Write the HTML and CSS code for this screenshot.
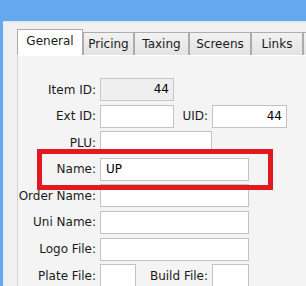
FILE: index.html
```html
<!DOCTYPE html>
<html lang="en">
<head>
    <meta charset="UTF-8">
    <meta name="viewport" content="width=device-width, initial-scale=1.0">
    <title>Item Editor</title>
    <link rel="stylesheet" href="styles.css">
</head>
<body>
    <div class="window">
        <div class="tabs">
            <div class="tab active w-general">General</div>
            <div class="tab w-pricing">Pricing</div>
            <div class="tab w-taxing">Taxing</div>
            <div class="tab w-screens">Screens</div>
            <div class="tab w-links">Links</div>
            <div class="tab w-more"></div>
        </div>
        <div class="panel">
            <div class="row">
                <label class="lbl">Item ID:</label>
                <div class="field readonly w74 num">44</div>
            </div>
            <div class="row">
                <label class="lbl">Ext ID:</label>
                <div class="field w74"></div>
                <label class="lbl2 w38">UID:</label>
                <div class="field w75 num">44</div>
            </div>
            <div class="row">
                <label class="lbl">PLU:</label>
                <div class="field w112"></div>
            </div>
            <div class="row">
                <label class="lbl">Name:</label>
                <div class="field w149">UP</div>
            </div>
            <div class="row">
                <label class="lbl">Order Name:</label>
                <div class="field w149"></div>
            </div>
            <div class="row">
                <label class="lbl">Uni Name:</label>
                <div class="field w149"></div>
            </div>
            <div class="row">
                <label class="lbl">Logo File:</label>
                <div class="field w149"></div>
            </div>
            <div class="row">
                <label class="lbl">Plate File:</label>
                <div class="field w36"></div>
                <label class="lbl2 w76">Build File:</label>
                <div class="field w37"></div>
            </div>
        </div>
        <div class="highlight"></div>
    </div>
</body>
</html>
```

FILE: styles.css
```css
body {
    margin: 0;
    background-color: #66a8f0;
    font-family: "DejaVu Sans", sans-serif;
    font-size: 12px;
    color: #1a1a1a;
    overflow: hidden;
}
.window {
    position: relative;
    margin: 21px 0 0 3px;
    height: 265px;
    background-color: #f0f0f0;
    border-top: 1px solid #d6e4f3;
    box-sizing: border-box;
    overflow: hidden;
}
.tabs {
    display: flex;
    align-items: flex-end;
    height: 26px;
    margin-top: 7px;
    padding-left: 14px;
    overflow: hidden;
}
.tab {
    flex: none;
    height: 23px;
    box-sizing: border-box;
    border: 1px solid #acacac;
    border-bottom: none;
    background: linear-gradient(#f2f2f2, #e3e3e3);
    text-align: center;
    line-height: 22px;
    white-space: nowrap;
}
.tab.active {
    position: relative;
    z-index: 1;
    height: 26px;
    background: #ffffff;
    line-height: 23px;
}
.w-general { width: 66px; }
.w-pricing { width: 51px; }
.w-taxing { width: 55px; }
.w-screens { width: 62px; }
.w-links { width: 52px; }
.w-more { width: 17px; }
.panel {
    margin-left: 14px;
    height: 240px;
    border: 1px solid #d5d5d5;
    border-right: none;
    border-top-color: #ffffff;
    background-color: #f4f4f4;
    padding-top: 22px;
    box-sizing: border-box;
    display: flex;
    flex-direction: column;
    gap: 3.6px;
}
.row {
    display: flex;
    align-items: center;
    height: 23px;
}
.lbl {
    flex: none;
    width: 82px;
    padding-right: 4px;
    box-sizing: border-box;
    text-align: right;
    white-space: nowrap;
}
.lbl2 {
    flex: none;
    padding-right: 4px;
    box-sizing: border-box;
    text-align: right;
    white-space: nowrap;
}
.field {
    flex: none;
    height: 23px;
    box-sizing: border-box;
    border: 1px solid #bfc2c7;
    background-color: #ffffff;
    padding: 0 5px;
    line-height: 21px;
    color: #000;
}
.field.readonly {
    background-color: #efefef;
    border-color: #c6c6c6;
}
.field.num {
    text-align: right;
    padding-right: 4px;
}
.w36 { width: 36px; }
.w37 { width: 37px; }
.w38 { width: 38px; }
.w74 { width: 74px; }
.w75 { width: 75px; }
.w76 { width: 76px; }
.w112 { width: 112px; }
.w149 { width: 149px; }
.highlight {
    position: absolute;
    left: 34px;
    top: 127px;
    width: 236px;
    height: 41px;
    border: 5px solid #e3191f;
    box-sizing: border-box;
}
```
